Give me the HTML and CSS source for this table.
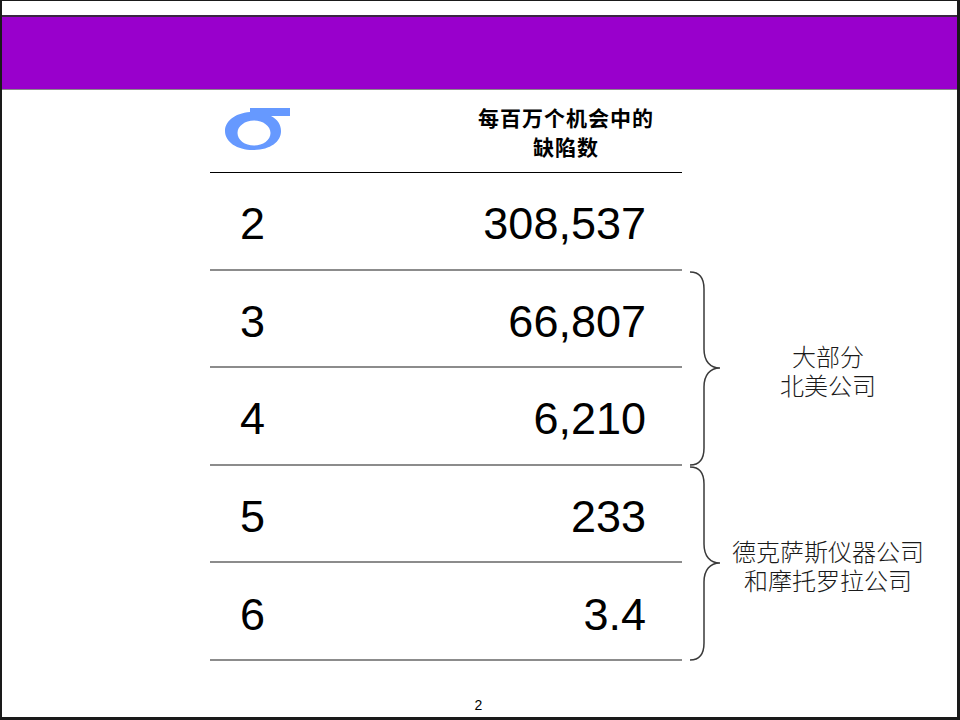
FILE: index.html
```html
<!DOCTYPE html>
<html lang="zh-CN">
<head>
    <meta charset="UTF-8">
    <title>西格玛水平与缺陷数</title>
    <link rel="stylesheet" href="styles.css">
</head>
<body>
    <div class="slide">
        <div class="band"></div>

        <div class="main">
            <div class="table">
                <div class="head">
                    <div class="sigma-cell">
                        <svg class="sigma" width="70" height="48" viewBox="222 106 70 48">
                            <path fill="#6699ff" fill-rule="evenodd" d="M253 112 C237 112 225 120 225 131 C225 142 237 150 253 150 C270 150 281 142 281 131 C281 124 277 119 271 116 L290 116 L290 108 L250 108 L250 112 Z M254 120.5 C245 120.5 237.5 126 237.5 133 C237.5 140 245 145.5 254 145.5 C263 145.5 270.5 140 270.5 133 C270.5 126 263 120.5 254 120.5 Z"/>
                        </svg>
                    </div>
                    <div class="title">每百万个机会中的<br>缺陷数</div>
                </div>
                <div class="row"><span>2</span><span>308,537</span></div>
                <div class="row"><span>3</span><span>66,807</span></div>
                <div class="row"><span>4</span><span>6,210</span></div>
                <div class="row"><span>5</span><span>233</span></div>
                <div class="row"><span>6</span><span>3.4</span></div>
            </div>

            <div class="notes">
                <div class="notes-gap"></div>
                <div class="group">
                    <svg class="brace" width="40" height="195" viewBox="0 0 40 195">
                        <path d="M8 1 C17 1 22 7 22 18 L22 78 C22 90 28 97 38 97 C28 97 22 104 22 116 L22 177 C22 188 17 194 8 194"/>
                    </svg>
                    <div class="label">大部分<br>北美公司</div>
                </div>
                <div class="group">
                    <svg class="brace" width="40" height="195" viewBox="0 0 40 195">
                        <path d="M8 1 C17 1 22 7 22 18 L22 78 C22 90 28 97 38 97 C28 97 22 104 22 116 L22 177 C22 188 17 194 8 194"/>
                    </svg>
                    <div class="label">德克萨斯仪器公司<br>和摩托罗拉公司</div>
                </div>
            </div>
        </div>

        <div class="foot">2</div>
    </div>
</body>
</html>
```

FILE: styles.css
```css
html, body {
    margin: 0;
    padding: 0;
    background-color: #fff;
}
body {
    font-family: "Liberation Sans", "Noto Sans CJK SC", sans-serif;
    color: #000;
}
.slide {
    width: 960px;
    height: 720px;
    box-sizing: border-box;
    border-style: solid;
    border-color: #1a1a1a;
    border-width: 1px 3px 3px 2px;
    overflow: hidden;
}
.band {
    margin-top: 14px;
    height: 72px;
    background-color: #9900cc;
    border-top: 2px solid #3a2642;
    border-bottom: 1px solid #8a8a8a;
}
.main {
    display: flex;
    padding-left: 208px;
}
.table {
    width: 472px;
}
.head {
    display: flex;
    height: 82px;
    border-bottom: 1px solid #000;
}
.sigma-cell {
    width: 240px;
}
.sigma {
    display: block;
    margin: 16px 0 0 12px;
}
.title {
    flex: 1;
    text-align: center;
    font-family: "Noto Sans CJK SC", sans-serif;
    font-weight: bold;
    font-size: 21px;
    line-height: 29px;
    padding-top: 13px;
    letter-spacing: 1px;
}
.row {
    display: flex;
    justify-content: space-between;
    align-items: center;
    box-sizing: border-box;
    height: 97.6px;
    padding: 6px 36px 0 30px;
    border-bottom: 2px solid #8c8c8c;
    font-size: 45px;
    line-height: 1;
}
.notes {
    width: 275px;
}
.notes-gap {
    height: 180.6px;
}
.group {
    display: flex;
    align-items: center;
    height: 195.2px;
}
.brace {
    display: block;
    flex: none;
}
.brace path {
    fill: none;
    stroke: #3a3a3a;
    stroke-width: 1.5;
}
.label {
    flex: 1;
    padding-right: 23px;
    padding-top: 3px;
    text-align: center;
    font-family: "Noto Sans CJK SC", sans-serif;
    font-weight: 300;
    font-size: 24px;
    line-height: 29px;
    color: #1a1a1a;
}
.foot {
    margin-top: 36px;
    text-align: center;
    font-size: 14px;
    line-height: 16px;
    padding-right: 2px;
}
```
